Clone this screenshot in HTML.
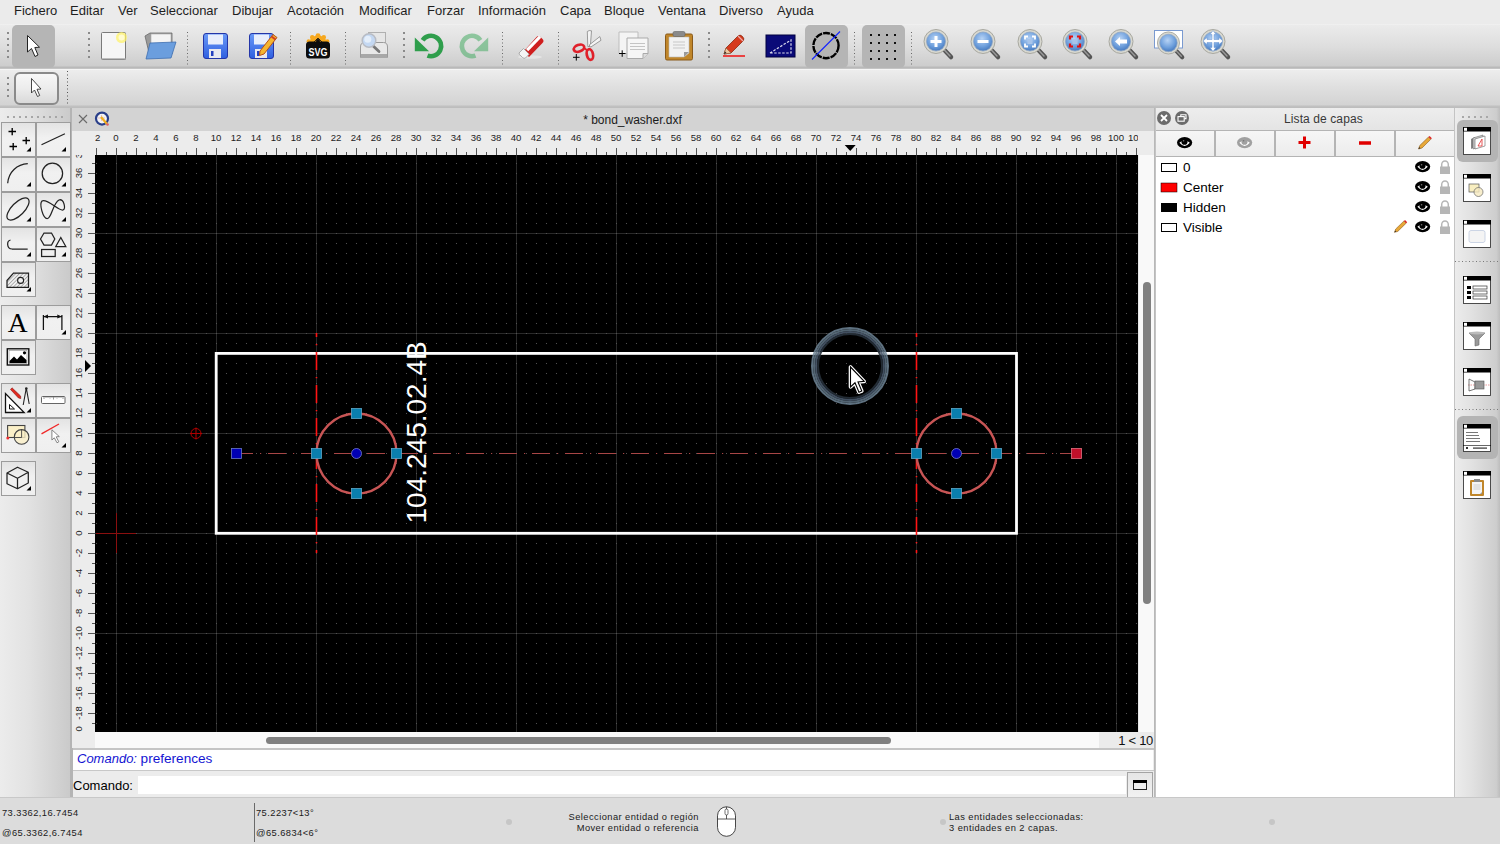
<!DOCTYPE html>
<html><head><meta charset="utf-8">
<style>
*{box-sizing:border-box}
body{margin:0;width:1500px;height:844px;position:relative;overflow:hidden;background:#dcdcdc;font-family:"Liberation Sans",sans-serif;color:#1a1a1a}
.a{position:absolute}
#menubar{left:0;top:0;width:1500px;height:24px;background:#ebebeb}
#menubar span{position:absolute;top:3px;font-size:13px;color:#1e1e1e;white-space:nowrap}
#tb1{left:0;top:24px;width:1500px;height:44px;background:linear-gradient(#f4f4f4 0,#ebebeb 1px,#dedede 50%,#cdcdcd 42px,#b9b9b9 43px,#b9b9b9 44px)}
#tb2{left:0;top:68px;width:1500px;height:39px;background:linear-gradient(#c4c4c4 0,#c4c4c4 1px,#f6f6f6 1px,#f6f6f6 2px,#ededed 2px,#dfdfdf 50%,#d3d3d3 37px,#c0c0c0 38px,#c0c0c0 39px)}
#palette{left:0;top:107px;width:72px;height:690px;background:linear-gradient(90deg,#ececec 0,#e2e2e2 40%,#c9c9c9 100%)}
#doc{left:72px;top:107px;width:1083px;height:690px;background:#ececec}
#dock{left:1155px;top:107px;width:300px;height:690px;background:#fff}
#rtb{left:1453px;top:107px;width:47px;height:690px;background:linear-gradient(90deg,#e8e8e8 0,#dedede 40%,#c6c6c6 100%)}
.pb{border:1px solid #9c9c9c;background:linear-gradient(#e3e3e3,#f1f1f1 45%,#efefef)}
.db{height:25px;background:linear-gradient(#f6f6f6,#ececec)}
#status{left:0;top:797px;width:1500px;height:47px;background:#dcdcdc}
</style></head><body>
<div id="menubar" class="a">
<span style="left:14px">Fichero</span><span style="left:70px">Editar</span><span style="left:118px">Ver</span><span style="left:150px">Seleccionar</span><span style="left:232px">Dibujar</span><span style="left:287px">Acotación</span><span style="left:359px">Modificar</span><span style="left:427px">Forzar</span><span style="left:478px">Información</span><span style="left:560px">Capa</span><span style="left:604px">Bloque</span><span style="left:658px">Ventana</span><span style="left:719px">Diverso</span><span style="left:777px">Ayuda</span>
</div>
<div id="tb1" class="a">
<svg class="a" style="left:0;top:0" width="1500" height="44">
<defs>
<radialGradient id="zg" cx="0.45" cy="0.35" r="0.7"><stop offset="0" stop-color="#b7d3f5"/><stop offset="0.6" stop-color="#6e9fdc"/><stop offset="1" stop-color="#3f72b8"/></radialGradient>
<linearGradient id="blueFl" x1="0" y1="0" x2="0" y2="1"><stop offset="0" stop-color="#6a9af7"/><stop offset="1" stop-color="#2f5fe0"/></linearGradient>
<g id="dots5"><rect x="-1" y="0" width="2" height="2"/><rect x="-1" y="6" width="2" height="2"/><rect x="-1" y="12" width="2" height="2"/><rect x="-1" y="18" width="2" height="2"/><rect x="-1" y="24" width="2" height="2"/></g>
<g id="mag"><line x1="20" y1="20" x2="28" y2="28.5" stroke="#555" stroke-width="4.5" stroke-linecap="round"/><line x1="20" y1="20" x2="27" y2="27.5" stroke="#999" stroke-width="1.5" stroke-linecap="round"/><circle cx="13" cy="13" r="12" fill="#d8d8d0" stroke="#a8a8a0" stroke-width="1"/><circle cx="13" cy="13" r="9.5" fill="url(#zg)" stroke="#8fa6c4" stroke-width="0.8"/></g>
</defs>
<g fill="#8a8a8a"><use href="#dots5" x="8" y="8"/><use href="#dots5" x="89" y="8"/><use href="#dots5" x="404" y="8"/><use href="#dots5" x="709" y="8"/><use href="#dots5" x="737" y="9" style="display:none"/></g>
<g stroke="#6a6a6a" stroke-width="1" stroke-dasharray="1 2.5"><line x1="187.5" y1="8" x2="187.5" y2="42"/><line x1="290.5" y1="8" x2="290.5" y2="42"/><line x1="345.5" y1="8" x2="345.5" y2="42"/><line x1="502.5" y1="8" x2="502.5" y2="42"/><line x1="558.5" y1="8" x2="558.5" y2="42"/><line x1="854.5" y1="8" x2="854.5" y2="42"/><line x1="911.5" y1="8" x2="911.5" y2="42"/></g>
<!-- selected buttons -->
<rect x="12" y="1" width="43" height="43" rx="5" fill="#b5b5b5"/>
<rect x="805" y="1" width="43" height="43" rx="5" fill="#b5b5b5"/>
<rect x="862" y="1" width="43" height="43" rx="5" fill="#b5b5b5"/>
<!-- pointer -->
<path d="M27.5 11.5 L27.5 28 L31.5 24.5 L35 32.5 L38 31 L34.8 23.5 L39.5 23.2 Z" fill="#fff" stroke="#222" stroke-width="1" stroke-linejoin="round"/>
<!-- new doc -->
<rect x="101.5" y="8.5" width="24" height="27" rx="1" fill="#f6f6f6" stroke="#7a7a7a"/>
<rect x="102" y="34" width="24" height="2" fill="#999" opacity="0.6"/>
<circle cx="121.5" cy="13.5" r="5.5" fill="#fff36a" opacity="0.75"/><circle cx="121.5" cy="13.5" r="3" fill="#fffbd0"/>
<!-- open -->
<path d="M145 12 L150 9 L172 9 L172 30 L150 33 Z" fill="#9a9a9a" stroke="#6a6a6a" stroke-width="0.8"/>
<path d="M151 10 L171 10 L171 28 L151 30 Z" fill="#f4f4f4" stroke="#aaa" stroke-width="0.6"/>
<path d="M150 19 L176 18 L171 34 L146 35 Z" fill="#6b9ede" stroke="#3f6fb0" stroke-width="0.8"/>
<!-- save -->
<g transform="translate(203,9)"><rect x="0.5" y="0.5" width="24" height="25" rx="2.5" fill="url(#blueFl)" stroke="#2436a8"/><rect x="5" y="1.5" width="15" height="10" fill="#e8eefc"/><rect x="6" y="16" width="12" height="9" fill="#e8e8f0"/><rect x="8" y="18" width="2.5" height="5" fill="#2440c0"/></g>
<g transform="translate(249,9)"><rect x="0.5" y="0.5" width="24" height="25" rx="2.5" fill="url(#blueFl)" stroke="#2436a8"/><rect x="5" y="1.5" width="15" height="10" fill="#e8eefc"/><rect x="6" y="16" width="12" height="9" fill="#e8e8f0"/><rect x="8" y="18" width="2.5" height="5" fill="#2440c0"/>
<path d="M11 18 L24 1.5 L28 4.5 L15 21 L10.5 22.5 Z" fill="#f5b530" stroke="#b8501a" stroke-width="1"/><path d="M22.5 3.5 L26.5 6.5" stroke="#d04020" stroke-width="2"/></g>
<!-- svg -->
<g transform="translate(306,8)"><g fill="#f7a81e"><circle cx="12" cy="3.6" r="2.4"/><circle cx="6.2" cy="5.2" r="2.2"/><circle cx="17.8" cy="5.2" r="2.2"/><circle cx="2.6" cy="9.2" r="2"/><circle cx="21.4" cy="9.2" r="2"/><path d="M2 11 L6 5 L12 3 L18 5 L22 11 L22 14 L2 14 Z"/></g><path d="M5 13 L12 6 L19 13" fill="none" stroke="#111" stroke-width="0.8"/><circle cx="12" cy="9" r="2" fill="#111"/>
<rect x="0" y="9.5" width="24" height="17" rx="3.5" fill="#0d0d0d"/><text x="12" y="24" font-family="Liberation Sans" font-weight="bold" font-size="11" fill="#fff" text-anchor="middle" textLength="19" lengthAdjust="spacingAndGlyphs">SVG</text></g>
<!-- print preview -->
<g transform="translate(360,8)"><rect x="8.5" y="0.5" width="17" height="12" fill="#e6e6e6" stroke="#b0b0b0"/><path d="M0.5 15 Q0.5 10.5 4.5 10.5 L23.5 10.5 Q27.5 10.5 27.5 15 L27.5 25.5 L0.5 25.5 Z" fill="#e8e8e8" stroke="#9a9a9a"/><rect x="1" y="22" width="26" height="4" fill="#a8a8a8"/><path d="M10 11 L19 19.5" stroke="#777" stroke-width="2.8" stroke-linecap="round"/><circle cx="9" cy="8.5" r="6.8" fill="#c4d8f2" stroke="#b8bcc4" stroke-width="1.5"/><circle cx="7.8" cy="7.3" r="3.5" fill="#e4eefa"/></g>
<!-- undo/redo -->
<g><path d="M422.6 16.2 A10.2 10.2 0 1 1 427.5 31.6" fill="none" stroke="#2f9e4c" stroke-width="4.6"/><path d="M414.8 13.6 L414.8 27.2 L429 27.2 Z" fill="#2f9e4c"/></g>
<g opacity="0.5"><path d="M480.4 16.2 A10.2 10.2 0 1 0 475.5 31.6" fill="none" stroke="#3aa85a" stroke-width="4.6"/><path d="M488.2 13.6 L488.2 27.2 L474 27.2 Z" fill="#3aa85a"/></g>
<!-- eraser -->
<g transform="translate(517,9)"><ellipse cx="13" cy="24" rx="12" ry="1.8" fill="#e4e4e4"/><path d="M6.5 18.5 L19.5 4 Q21.5 2 23.5 4 L25.5 6 Q27.5 8 25.5 10 L12 24 Z" fill="#cf1e1e"/><path d="M9 16 L22 2.6 L24.2 4.8 L11.2 18.2 Z" fill="#fff"/><path d="M2 20 L6.5 15.5 L12.2 21.2 L8.5 25 Q7 26 5.5 24.5 L2.5 21.5 Z" fill="#f4f4f4" stroke="#9a9a9a" stroke-width="0.8"/></g>
<!-- cut -->
<g><path d="M587.3 7.5 Q589 6 591.5 6.8 L590.3 22.5 L587.8 22.5 Z" fill="#f4f4f4" stroke="#777" stroke-width="0.7"/><path d="M599.8 12.6 L601 16.3 L590.6 23.2 L589.2 21 Z" fill="#f4f4f4" stroke="#777" stroke-width="0.7"/>
<ellipse cx="579" cy="24.2" rx="5.4" ry="3.3" transform="rotate(-20 579 24.2)" fill="none" stroke="#e0202a" stroke-width="2.7"/><ellipse cx="589.9" cy="30.5" rx="3.1" ry="5.4" transform="rotate(-12 589.9 30.5)" fill="none" stroke="#e0202a" stroke-width="2.7"/><path d="M584 24 L587.5 26.5" stroke="#e0202a" stroke-width="2"/>
<path d="M573 33.3 h6.6 M576.3 30 v6.6" stroke="#000" stroke-width="1"/></g>
<!-- copy -->
<g transform="translate(618,7.5)"><path d="M1 0.5 H20 V22 H1 Z" fill="#f4f4f4" stroke="#bdbdbd"/><path d="M9 6.5 H30 V22 L25 27 H9 Z" fill="#f6f6f6" stroke="#aaa"/><path d="M25 27 L25 22 L30 22" fill="#ddd" stroke="#aaa"/><g stroke="#c4c4c4"><line x1="12" y1="12" x2="27" y2="12"/><line x1="12" y1="15" x2="27" y2="15"/><line x1="12" y1="18" x2="27" y2="18"/></g><path d="M1 22 h6.5 M4.2 18.8 v6.5" stroke="#000" stroke-width="1"/></g>
<!-- paste -->
<g transform="translate(665,7)"><rect x="0.5" y="3" width="27" height="26" rx="1.5" fill="#c0862a" stroke="#8a5a1a"/><path d="M4 6 H24 V22 L19 26 H4 Z" fill="#f2f2f2" stroke="#bbb" stroke-width="0.6"/><path d="M19 26 L19 21 L24 21 Z" fill="#999"/><g stroke="#c8c8c8"><line x1="8" y1="11" x2="20" y2="11"/><line x1="8" y1="14" x2="20" y2="14"/><line x1="8" y1="17" x2="20" y2="17"/></g><rect x="8" y="0.5" width="12" height="5" rx="1.5" fill="#8a8a8a" stroke="#666" stroke-width="0.6"/></g>
<!-- pencil -->
<g transform="translate(723,11)"><line x1="0" y1="21" x2="22" y2="21" stroke="#f01010" stroke-width="1.5"/><path d="M1 19 L3 13 L15 1 Q17 -1 19.5 1.5 Q22 4 20 6 L8 18 Z" fill="#d63b1e" stroke="#8a2a10" stroke-width="0.8"/><path d="M1 19 L3 13 L8 18 Z" fill="#f0c8a0" stroke="#8a5a3a" stroke-width="0.6"/><path d="M1 19 L2 16.5 L3.5 18 Z" fill="#222"/><path d="M15 1 L20 6" stroke="#eaa" stroke-width="1.2"/></g>
<!-- blue rect -->
<g transform="translate(766,11)"><rect x="0" y="0" width="29" height="22" fill="#0a0a78" stroke="#000040"/><path d="M4 18 L25 5 L25 18 Z" fill="none" stroke="#dde" stroke-width="1.2" stroke-dasharray="2.5 1.5"/></g>
<!-- circle slash -->
<g transform="translate(812,8)"><circle cx="14" cy="13.6" r="12.6" fill="none" stroke="#000" stroke-width="2.4" stroke-dasharray="7 1"/><line x1="0" y1="27.5" x2="28" y2="-0.5" stroke="#1020ff" stroke-width="1.1"/></g>
<!-- grid dots -->
<g fill="#111" transform="translate(870,10)"><rect x="0" y="0" width="2" height="2"/><rect x="8" y="0" width="2" height="2"/><rect x="16" y="0" width="2" height="2"/><rect x="24" y="0" width="2" height="2"/><rect x="0" y="8" width="2" height="2"/><rect x="8" y="8" width="2" height="2"/><rect x="16" y="8" width="2" height="2"/><rect x="24" y="8" width="2" height="2"/><rect x="0" y="16" width="2" height="2"/><rect x="8" y="16" width="2" height="2"/><rect x="16" y="16" width="2" height="2"/><rect x="24" y="16" width="2" height="2"/><rect x="0" y="24" width="2" height="2"/><rect x="8" y="24" width="2" height="2"/><rect x="16" y="24" width="2" height="2"/><rect x="24" y="24" width="2" height="2"/></g>
<!-- zoom -->
<g transform="translate(923,4.5)"><use href="#mag"/><path d="M13 7.5 V18.5 M7.5 13 H18.5" stroke="#fff" stroke-width="3"/></g>
<g transform="translate(970,4.5)"><use href="#mag"/><path d="M7.5 13 H18.5" stroke="#fff" stroke-width="3"/></g>
<g transform="translate(1017,4.5)"><use href="#mag"/><path d="M8 11 V8 H11 M15 8 H18 V11 M18 15 V18 H15 M11 18 H8 V15" fill="none" stroke="#fff" stroke-width="1.8"/><rect x="10.5" y="10.5" width="5" height="5" fill="#a8c4ea"/></g>
<g transform="translate(1062,4.5)"><use href="#mag"/><path d="M8 11 V8 H11 M15 8 H18 V11 M18 15 V18 H15 M11 18 H8 V15" fill="none" stroke="#e01010" stroke-width="2.2"/><rect x="10.5" y="10.5" width="5" height="5" fill="#a8c4ea"/></g>
<g transform="translate(1108,4.5)"><use href="#mag"/><path d="M7 13 L12 8.5 V11 H19 V15 H12 V17.5 Z" fill="#fff"/></g>
<g transform="translate(1154,6)"><rect x="0.5" y="0.5" width="28" height="17.5" fill="#fff" stroke="#7a9ad0"/><g transform="translate(2.5,1) scale(0.92)"><use href="#mag"/></g></g>
<g transform="translate(1200,4.5)"><use href="#mag"/><path d="M13 2 L16 6 H14 V11 H19 V9 L23 12.5 L19 16 V14 H14 V19 H16 L13 23 L10 19 H12 V14 H7 V16 L3 12.5 L7 9 V11 H12 V6 H10 Z" fill="#fff" stroke="#6a95d0" stroke-width="0.5"/></g>
</svg>
</div>
<div id="tb2" class="a">
<svg class="a" style="left:0;top:0" width="200" height="39">
<g fill="#8a8a8a"><rect x="7" y="9" width="2" height="2"/><rect x="7" y="15" width="2" height="2"/><rect x="7" y="21" width="2" height="2"/><rect x="7" y="27" width="2" height="2"/></g>
<defs><linearGradient id="btn2" x1="0" y1="0" x2="0" y2="1"><stop offset="0" stop-color="#f8f8f8"/><stop offset="0.5" stop-color="#ececec"/><stop offset="1" stop-color="#d8d8d8"/></linearGradient></defs>
<rect x="15" y="5" width="43" height="31" rx="5" fill="url(#btn2)" stroke="#8a8a8a" stroke-width="2"/>
<path d="M31.5 10.5 L31.5 25 L34.5 22 L37.5 28.5 L39.7 27.5 L37 21.3 L41 21 Z" fill="#fff" stroke="#333" stroke-width="0.9" stroke-linejoin="round"/>
<line x1="67.5" y1="3" x2="67.5" y2="37" stroke="#555" stroke-width="1" stroke-dasharray="1 2.5"/>
</svg>
</div>
<div id="palette" class="a">
<svg class="a" style="left:0;top:0" width="72" height="20"><g fill="#a6a6a6"><rect x="7" y="9" width="2" height="2"/><rect x="13" y="9" width="2" height="2"/><rect x="19" y="9" width="2" height="2"/><rect x="25" y="9" width="2" height="2"/><rect x="31" y="9" width="2" height="2"/><rect x="37" y="9" width="2" height="2"/><rect x="43" y="9" width="2" height="2"/><rect x="49" y="9" width="2" height="2"/><rect x="55" y="9" width="2" height="2"/><rect x="61" y="9" width="2" height="2"/></g></svg>
<div class="a" style="left:70px;top:0;width:2px;height:690px;background:#b4b4b4"></div>
<div class="a pb" style="left:1px;top:15px;width:35px;height:35px"><svg width="35" height="35" style="position:absolute;left:-1px;top:-1px"><path d="M7.5 9.5h7.5M11.2 6v7.3M21.5 18.5h7.5M25.2 15v7.3M8.5 24.5h7.5M12.2 21v7.3" stroke="#000" stroke-width="1.35"/><path d="M25.5 29.5 L30 25 L30 29.5 Z" fill="#000"/></svg></div>
<div class="a pb" style="left:36px;top:15px;width:35px;height:35px"><svg width="35" height="35" style="position:absolute;left:-1px;top:-1px"><path d="M5.5 22.7 L28.9 11.8" fill="none" stroke="#222" stroke-width="1.25"/><path d="M25.5 29.5 L30 25 L30 29.5 Z" fill="#000"/></svg></div>
<div class="a pb" style="left:1px;top:50px;width:35px;height:35px"><svg width="35" height="35" style="position:absolute;left:-1px;top:-1px"><path d="M6.7 26.2 C7.5 15 16 7.2 26.8 6.6" fill="none" stroke="#222" stroke-width="1.25"/><path d="M25.5 29.5 L30 25 L30 29.5 Z" fill="#000"/></svg></div>
<div class="a pb" style="left:36px;top:50px;width:35px;height:35px"><svg width="35" height="35" style="position:absolute;left:-1px;top:-1px"><circle cx="16.4" cy="16.4" r="10.2" fill="none" stroke="#222" stroke-width="1.25"/><path d="M25.5 29.5 L30 25 L30 29.5 Z" fill="#000"/></svg></div>
<div class="a pb" style="left:1px;top:85px;width:35px;height:35px"><svg width="35" height="35" style="position:absolute;left:-1px;top:-1px"><ellipse cx="17" cy="17" rx="14.3" ry="6.3" transform="rotate(-45 17 17)" fill="none" stroke="#222" stroke-width="1.25"/><path d="M25.5 29.5 L30 25 L30 29.5 Z" fill="#000"/></svg></div>
<div class="a pb" style="left:36px;top:85px;width:35px;height:35px"><svg width="35" height="35" style="position:absolute;left:-1px;top:-1px"><path d="M6 9 C3 12 7 27 11.5 26.5 C15.5 26 17 11 23 8 C28 6 30 17 27 18 C23 19.5 11 6 6 9 Z" fill="none" stroke="#222" stroke-width="1.25"/><path d="M25.5 29.5 L30 25 L30 29.5 Z" fill="#000"/></svg></div>
<div class="a pb" style="left:1px;top:120px;width:35px;height:35px"><svg width="35" height="35" style="position:absolute;left:-1px;top:-1px"><path d="M9.5 13 C5.5 14 5.5 21.5 11 22 L26.7 22" fill="none" stroke="#222" stroke-width="1.25"/><path d="M25.5 29.5 L30 25 L30 29.5 Z" fill="#000"/></svg></div>
<div class="a pb" style="left:36px;top:120px;width:35px;height:35px"><svg width="35" height="35" style="position:absolute;left:-1px;top:-1px"><path d="M4.5 12 L8 6 L15.5 6 L18.8 12 L15.5 18 L8 18 Z" fill="none" stroke="#222" stroke-width="1.25"/><path d="M19.8 19.5 L24.8 10.5 L29.8 19.5 Z" fill="none" stroke="#222" stroke-width="1.25"/><rect x="5.6" y="22.5" width="13.6" height="7" fill="none" stroke="#222" stroke-width="1.25"/><path d="M25.5 29.5 L30 25 L30 29.5 Z" fill="#000"/></svg></div>
<div class="a pb" style="left:1px;top:155px;width:35px;height:35px"><svg width="35" height="35" style="position:absolute;left:-1px;top:-1px"><defs><pattern id="hp" patternUnits="userSpaceOnUse" width="2.6" height="2.6" patternTransform="rotate(45)"><line x1="0" y1="0" x2="0" y2="2.6" stroke="#555" stroke-width="0.8"/></pattern></defs><path d="M6 18.5 L12.5 11 L27.5 11 L27.5 25.3 L6 25.3 Z" fill="url(#hp)" stroke="#222" stroke-width="1.25"/><circle cx="19.6" cy="18.4" r="3" fill="#f0f0f0" stroke="#222" stroke-width="1.1"/><path d="M25.5 29.5 L30 25 L30 29.5 Z" fill="#000"/></svg></div>
<div class="a pb" style="left:1px;top:198px;width:35px;height:35px"><svg width="35" height="35" style="position:absolute;left:-1px;top:-1px"><text x="16.8" y="26.7" font-family="Liberation Serif" font-size="27.5" text-anchor="middle" fill="#000">A</text></svg></div>
<div class="a pb" style="left:36px;top:198px;width:35px;height:35px"><svg width="35" height="35" style="position:absolute;left:-1px;top:-1px"><path d="M7.4 10 V25 M25.9 10 V25 M8 11.6 H25.3" stroke="#111" stroke-width="1.25" fill="none"/><path d="M7.6 11.6 L12 9.6 L12 13.6 Z M25.7 11.6 L21.3 9.6 L21.3 13.6 Z" fill="#111"/><path d="M25.5 29.5 L30 25 L30 29.5 Z" fill="#000"/></svg></div>
<div class="a pb" style="left:1px;top:233px;width:35px;height:35px"><svg width="35" height="35" style="position:absolute;left:-1px;top:-1px"><rect x="6.3" y="8.8" width="21.5" height="16.2" fill="#fff" stroke="#111" stroke-width="1.4"/><rect x="8" y="10.5" width="18" height="12.8" fill="none" stroke="#777" stroke-width="0.5"/><path d="M8.5 23 L8.5 21 L13 16.5 L16 19.5 L20 15 L25.5 20 L25.5 23 Z" fill="#000"/><circle cx="23.5" cy="12.8" r="1.6" fill="#000"/></svg></div>
<div class="a pb" style="left:1px;top:276px;width:35px;height:35px"><svg width="35" height="35" style="position:absolute;left:-1px;top:-1px"><path d="M4.5 10.5 L4.5 29.5 L23.2 29.5 Z" fill="#fff" stroke="#111" stroke-width="1.3"/><path d="M8.5 21.5 L8.5 26 L13.5 26 Z" fill="none" stroke="#111" stroke-width="1"/><path d="M9.5 6.5 L11 4.8 L19.6 13 L19.8 15.6 L17.5 15 Z" fill="#e02a20" stroke="#8a1010" stroke-width="0.6"/><path d="M25.3 5 L22.2 22 M25.3 5 L28.2 21" stroke="#222" stroke-width="1.1"/><circle cx="25.3" cy="5.5" r="1.3" fill="#222"/><path d="M25.5 29.5 L30 25 L30 29.5 Z" fill="#000"/></svg></div>
<div class="a pb" style="left:36px;top:276px;width:35px;height:35px"><svg width="35" height="35" style="position:absolute;left:-1px;top:-1px"><rect x="5.5" y="13.5" width="23.5" height="7" rx="1" fill="#fff" stroke="#666" stroke-width="1"/><path d="M8 13.5v2.5M10 13.5v1.5M12 13.5v1.5M14 13.5v2M16 13.5v1.5M17.5 13.5v3M19 13.5v1.5M21 13.5v2M23 13.5v1.5M25 13.5v1.5M27 13.5v2.5" stroke="#555" stroke-width="0.6"/></svg></div>
<div class="a pb" style="left:1px;top:311px;width:35px;height:35px"><svg width="35" height="35" style="position:absolute;left:-1px;top:-1px"><rect x="6.6" y="7.5" width="17.3" height="12" fill="#fbf0c8" stroke="#444" stroke-width="1.1"/><circle cx="20.6" cy="18.9" r="7.3" fill="#fbf0c8" fill-opacity="0.8" stroke="#444" stroke-width="1.1"/><path d="M20.6 11.6 V19.5 H13.3" fill="none" stroke="#444" stroke-width="0.9"/><circle cx="6.8" cy="20" r="1.5" fill="#f03030"/></svg></div>
<div class="a pb" style="left:36px;top:311px;width:35px;height:35px"><svg width="35" height="35" style="position:absolute;left:-1px;top:-1px"><path d="M5.5 15.8 L23 6" stroke="#f02828" stroke-width="1.4"/><path d="M15.9 11.8 L15.9 22 L18.3 19.8 L21 24.8 L22.8 23.8 L20.2 18.8 L23.3 18.6 Z" fill="#fff" stroke="#777" stroke-width="0.9" stroke-linejoin="round"/><path d="M25.5 29.5 L30 25 L30 29.5 Z" fill="#000"/></svg></div>
<div class="a pb" style="left:1px;top:354px;width:35px;height:35px"><svg width="35" height="35" style="position:absolute;left:-1px;top:-1px"><path d="M6 12 L16.5 6.2 L27.3 11.3 L27.3 22 L16.5 27.8 L6 22.7 Z M6 12 L16.5 17.2 L27.3 11.3 M16.5 17.2 V27.8" fill="none" stroke="#222" stroke-width="1.25" stroke-linejoin="round"/><path d="M25.5 29.5 L30 25 L30 29.5 Z" fill="#000"/></svg></div>
</div>
<div id="doc" class="a">
<div class="a" style="left:0;top:0;width:1083px;height:24px;background:#d3d3d3"></div>
<svg class="a" style="left:6px;top:7px" width="10" height="10"><path d="M1 1L9 9M9 1L1 9" stroke="#6a6a6a" stroke-width="1.1"/></svg>
<svg class="a" style="left:22px;top:4px" width="16" height="16"><circle cx="8" cy="7.6" r="6" fill="#f4f4f4" stroke="#2a3f8a" stroke-width="2.2"/><path d="M4 7 h7 M7.5 4 v6" stroke="#e0a0a0" stroke-width="0.6"/><path d="M7 6 L13 13" stroke="#f0b020" stroke-width="2.2"/><circle cx="13.5" cy="13.5" r="1.3" fill="#e06060"/></svg>
<div class="a" style="left:0;top:13px;width:1083px;text-align:center;font-size:12px;line-height:0;color:#1a1a1a"><span style="position:relative;left:19px">* bond_washer.dxf</span></div>
<div class="a" style="left:0;top:24px;width:1083px;height:24px;background:#ececec"></div>
<svg class="a" style="left:23px;top:24px" width="1043" height="24"><g font-family="Liberation Sans" font-size="9.6" fill="#1e1e1e" text-anchor="middle"><text x="1" y="10.2">-2</text><text x="21" y="10.2">0</text><text x="41" y="10.2">2</text><text x="61" y="10.2">4</text><text x="81" y="10.2">6</text><text x="101" y="10.2">8</text><text x="121" y="10.2">10</text><text x="141" y="10.2">12</text><text x="161" y="10.2">14</text><text x="181" y="10.2">16</text><text x="201" y="10.2">18</text><text x="221" y="10.2">20</text><text x="241" y="10.2">22</text><text x="261" y="10.2">24</text><text x="281" y="10.2">26</text><text x="301" y="10.2">28</text><text x="321" y="10.2">30</text><text x="341" y="10.2">32</text><text x="361" y="10.2">34</text><text x="381" y="10.2">36</text><text x="401" y="10.2">38</text><text x="421" y="10.2">40</text><text x="441" y="10.2">42</text><text x="461" y="10.2">44</text><text x="481" y="10.2">46</text><text x="501" y="10.2">48</text><text x="521" y="10.2">50</text><text x="541" y="10.2">52</text><text x="561" y="10.2">54</text><text x="581" y="10.2">56</text><text x="601" y="10.2">58</text><text x="621" y="10.2">60</text><text x="641" y="10.2">62</text><text x="661" y="10.2">64</text><text x="681" y="10.2">66</text><text x="701" y="10.2">68</text><text x="721" y="10.2">70</text><text x="741" y="10.2">72</text><text x="761" y="10.2">74</text><text x="781" y="10.2">76</text><text x="801" y="10.2">78</text><text x="821" y="10.2">80</text><text x="841" y="10.2">82</text><text x="861" y="10.2">84</text><text x="881" y="10.2">86</text><text x="901" y="10.2">88</text><text x="921" y="10.2">90</text><text x="941" y="10.2">92</text><text x="961" y="10.2">94</text><text x="981" y="10.2">96</text><text x="1001" y="10.2">98</text><text x="1021" y="10.2">100</text><text x="1041" y="10.2">102</text></g><path d="M1.5 17v7M11.5 21v3M21.5 17v7M31.5 21v3M41.5 17v7M51.5 21v3M61.5 17v7M71.5 21v3M81.5 17v7M91.5 21v3M101.5 17v7M111.5 21v3M121.5 17v7M131.5 21v3M141.5 17v7M151.5 21v3M161.5 17v7M171.5 21v3M181.5 17v7M191.5 21v3M201.5 17v7M211.5 21v3M221.5 17v7M231.5 21v3M241.5 17v7M251.5 21v3M261.5 17v7M271.5 21v3M281.5 17v7M291.5 21v3M301.5 17v7M311.5 21v3M321.5 17v7M331.5 21v3M341.5 17v7M351.5 21v3M361.5 17v7M371.5 21v3M381.5 17v7M391.5 21v3M401.5 17v7M411.5 21v3M421.5 17v7M431.5 21v3M441.5 17v7M451.5 21v3M461.5 17v7M471.5 21v3M481.5 17v7M491.5 21v3M501.5 17v7M511.5 21v3M521.5 17v7M531.5 21v3M541.5 17v7M551.5 21v3M561.5 17v7M571.5 21v3M581.5 17v7M591.5 21v3M601.5 17v7M611.5 21v3M621.5 17v7M631.5 21v3M641.5 17v7M651.5 21v3M661.5 17v7M671.5 21v3M681.5 17v7M691.5 21v3M701.5 17v7M711.5 21v3M721.5 17v7M731.5 21v3M741.5 17v7M751.5 21v3M761.5 17v7M771.5 21v3M781.5 17v7M791.5 21v3M801.5 17v7M811.5 21v3M821.5 17v7M831.5 21v3M841.5 17v7M851.5 21v3M861.5 17v7M871.5 21v3M881.5 17v7M891.5 21v3M901.5 17v7M911.5 21v3M921.5 17v7M931.5 21v3M941.5 17v7M951.5 21v3M961.5 17v7M971.5 21v3M981.5 17v7M991.5 21v3M1001.5 17v7M1011.5 21v3M1021.5 17v7M1031.5 21v3M1041.5 17v7M1051.5 21v3" stroke="#555" stroke-width="1"/>
<path d="M750 14 h11 l-5.5 6 z" fill="#000" transform="translate(-0.3,0)"/></svg>
<div class="a" style="left:0;top:48px;width:23px;height:593px;background:#ececec"></div>
<svg class="a" style="left:0;top:48px" width="23" height="577"><g font-family="Liberation Sans" font-size="9.5" fill="#1e1e1e" text-anchor="middle"><text transform="translate(9.6 578) rotate(-90)" x="0" y="0">-20</text><text transform="translate(9.6 558) rotate(-90)" x="0" y="0">-18</text><text transform="translate(9.6 538) rotate(-90)" x="0" y="0">-16</text><text transform="translate(9.6 518) rotate(-90)" x="0" y="0">-14</text><text transform="translate(9.6 498) rotate(-90)" x="0" y="0">-12</text><text transform="translate(9.6 478) rotate(-90)" x="0" y="0">-10</text><text transform="translate(9.6 458) rotate(-90)" x="0" y="0">-8</text><text transform="translate(9.6 438) rotate(-90)" x="0" y="0">-6</text><text transform="translate(9.6 418) rotate(-90)" x="0" y="0">-4</text><text transform="translate(9.6 398) rotate(-90)" x="0" y="0">-2</text><text transform="translate(9.6 378) rotate(-90)" x="0" y="0">0</text><text transform="translate(9.6 358) rotate(-90)" x="0" y="0">2</text><text transform="translate(9.6 338) rotate(-90)" x="0" y="0">4</text><text transform="translate(9.6 318) rotate(-90)" x="0" y="0">6</text><text transform="translate(9.6 298) rotate(-90)" x="0" y="0">8</text><text transform="translate(9.6 278) rotate(-90)" x="0" y="0">10</text><text transform="translate(9.6 258) rotate(-90)" x="0" y="0">12</text><text transform="translate(9.6 238) rotate(-90)" x="0" y="0">14</text><text transform="translate(9.6 218) rotate(-90)" x="0" y="0">16</text><text transform="translate(9.6 198) rotate(-90)" x="0" y="0">18</text><text transform="translate(9.6 178) rotate(-90)" x="0" y="0">20</text><text transform="translate(9.6 158) rotate(-90)" x="0" y="0">22</text><text transform="translate(9.6 138) rotate(-90)" x="0" y="0">24</text><text transform="translate(9.6 118) rotate(-90)" x="0" y="0">26</text><text transform="translate(9.6 98) rotate(-90)" x="0" y="0">28</text><text transform="translate(9.6 78) rotate(-90)" x="0" y="0">30</text><text transform="translate(9.6 58) rotate(-90)" x="0" y="0">32</text><text transform="translate(9.6 38) rotate(-90)" x="0" y="0">34</text><text transform="translate(9.6 18) rotate(-90)" x="0" y="0">36</text><text transform="translate(9.6 -2) rotate(-90)" x="0" y="0">38</text></g><path d="M20 588.5h3M16 578.5h7M20 568.5h3M16 558.5h7M20 548.5h3M16 538.5h7M20 528.5h3M16 518.5h7M20 508.5h3M16 498.5h7M20 488.5h3M16 478.5h7M20 468.5h3M16 458.5h7M20 448.5h3M16 438.5h7M20 428.5h3M16 418.5h7M20 408.5h3M16 398.5h7M20 388.5h3M16 378.5h7M20 368.5h3M16 358.5h7M20 348.5h3M16 338.5h7M20 328.5h3M16 318.5h7M20 308.5h3M16 298.5h7M20 288.5h3M16 278.5h7M20 268.5h3M16 258.5h7M20 248.5h3M16 238.5h7M20 228.5h3M16 218.5h7M20 208.5h3M16 198.5h7M20 188.5h3M16 178.5h7M20 168.5h3M16 158.5h7M20 148.5h3M16 138.5h7M20 128.5h3M16 118.5h7M20 108.5h3M16 98.5h7M20 88.5h3M16 78.5h7M20 68.5h3M16 58.5h7M20 48.5h3M16 38.5h7M20 28.5h3M16 18.5h7M20 8.5h3M16 -1.5h7" stroke="#555" stroke-width="1"/>
<path d="M13 205 v12 l6 -6 z" fill="#000"/></svg>
<svg class="a" style="left:23px;top:48px" width="1043" height="577" id="cv">
<defs>
<pattern id="gd" patternUnits="userSpaceOnUse" width="10" height="10"><rect x="1" y="8" width="1" height="1" fill="#525252"/></pattern>
</defs>
<rect width="1043" height="577" fill="#000"/>
<g stroke="#2a2a2a" stroke-width="1"><path d="M21.5 0V577M121.5 0V577M221.5 0V577M321.5 0V577M421.5 0V577M521.5 0V577M621.5 0V577M721.5 0V577M821.5 0V577M921.5 0V577M1021.5 0V577"/><path d="M0 78.5H1043M0 178.5H1043M0 278.5H1043M0 378.5H1043M0 478.5H1043"/></g>
<rect width="1043" height="577" fill="url(#gd)"/>

<!-- origin cross -->
<path d="M1 378.5H41M21.5 358V398" stroke="#8a0f0f" stroke-width="1"/>
<!-- red small crosshair -->
<g stroke="#b00000" stroke-width="1" fill="none"><circle cx="101" cy="278.5" r="5"/><path d="M95 278.5h12M101 272.5v12"/></g>
<!-- rectangle -->
<rect x="121.2" y="198.4" width="800.3" height="179.9" fill="none" stroke="#fff" stroke-width="2.8"/>
<!-- vertical center lines -->
<g stroke="#ff1414" stroke-width="1.6" stroke-dasharray="18 7 1.2 6.8" stroke-dashoffset="14"><line x1="221.5" y1="178" x2="221.5" y2="398"/><line x1="821.5" y1="178" x2="821.5" y2="398"/></g>
<!-- horizontal center line -->
<line x1="140" y1="298.5" x2="981" y2="298.5" stroke="#a84646" stroke-width="1.2" stroke-dasharray="18 7 1.2 6.8" stroke-dashoffset="0"/>
<!-- circles -->
<g fill="none" stroke="#c85555" stroke-width="2.4"><circle cx="261.5" cy="298.5" r="40"/><circle cx="861.5" cy="298.5" r="40"/></g>
<!-- text -->
<text transform="translate(331.2 368.5) rotate(-90)" font-family="Liberation Sans" font-size="28" fill="#fff">104.245.02.4B</text>
<!-- handles -->
<g fill="#0a7fae" stroke="#5fa9c9" stroke-width="0.8">
<rect x="216.5" y="293.5" width="10" height="10"/><rect x="296.5" y="293.5" width="10" height="10"/><rect x="256.5" y="253.5" width="10" height="10"/><rect x="256.5" y="333.5" width="10" height="10"/>
<rect x="816.5" y="293.5" width="10" height="10"/><rect x="896.5" y="293.5" width="10" height="10"/><rect x="856.5" y="253.5" width="10" height="10"/><rect x="856.5" y="333.5" width="10" height="10"/>
</g>
<rect x="136.5" y="293.5" width="10" height="10" fill="#0000b4" stroke="#6a78c8" stroke-width="0.8"/>
<rect x="976.5" y="293.5" width="10" height="10" fill="#c0102a" stroke="#e07080" stroke-width="0.8"/>
<g fill="#0000b4" stroke="#7a80d0" stroke-width="0.8"><circle cx="261.5" cy="298.5" r="5"/><circle cx="861.5" cy="298.5" r="5"/></g>
<!-- cursor ring -->
<g fill="none"><circle cx="755" cy="211" r="38" stroke="#6f8596" stroke-width="2" opacity="0.85"/><circle cx="755" cy="211" r="36" stroke="#5b6f7e" stroke-width="2" opacity="0.9"/><circle cx="755" cy="211" r="34" stroke="#48586a" stroke-width="2" opacity="0.9"/><circle cx="755" cy="211" r="32" stroke="#26303a" stroke-width="2" opacity="0.9"/></g>
<path d="M755.5 212 L755.5 232 L760 227.8 L764 237.2 L766.8 236 L763 226.9 L769.2 226.4 Z" fill="#fff" stroke="#fff" stroke-width="3.6" stroke-linejoin="round"/><path d="M755.5 212 L755.5 232 L760 227.8 L764 237.2 L766.8 236 L763 226.9 L769.2 226.4 Z" fill="#fff" stroke="#000" stroke-width="1.1" stroke-linejoin="miter"/>
</svg>
<div class="a" style="left:1066px;top:48px;width:17px;height:593px;background:#f9f9f9;border-left:1px solid #e8e8e8"></div>
<div class="a" style="left:1071px;top:175px;width:8px;height:322px;border-radius:4px;background:#808080"></div>
<div class="a" style="left:23px;top:625px;width:1004px;height:16px;background:#f9f9f9"></div>
<div class="a" style="left:194px;top:630px;width:625px;height:7px;border-radius:4px;background:#808080"></div>
<div class="a" style="left:1027px;top:625px;width:55px;height:16px;background:#ebebeb;font-size:13px;line-height:17px;text-align:right;color:#111;padding-right:1px;white-space:nowrap;letter-spacing:-0.3px">1 &lt; 10</div>
<div class="a" style="left:1082px;top:0;width:1px;height:690px;background:#b8b8b8"></div>
</div>
<div id="dock" class="a">
<div class="a" style="left:0;top:0;width:1px;height:690px;background:#c4c4c4"></div>
<div class="a" style="left:1px;top:1px;width:298px;height:23px;background:linear-gradient(#ededed,#e4e4e4)"></div>
<svg class="a" style="left:0;top:0" width="299" height="50">
<circle cx="9" cy="11" r="7" fill="#6b6b6b"/><path d="M6 8 L12 14 M12 8 L6 14" stroke="#fff" stroke-width="1.8"/>
<circle cx="27" cy="11" r="7" fill="#6b6b6b"/><path d="M25.8 9.6 V7.8 H31 V11.6 H29.4" fill="none" stroke="#fff" stroke-width="1.1"/><rect x="23" y="9.6" width="6.2" height="4.6" fill="#6b6b6b" stroke="#fff" stroke-width="1.1"/>
</svg>
<div class="a" style="left:129px;top:5px;font-size:12px;color:#383838;white-space:nowrap;letter-spacing:0.1px">Lista de capas</div>
<div class="a" style="left:1px;top:23px;width:298px;height:27px;background:#b4b4b4"></div>
<div class="a db" style="left:1px;top:24px;width:58px"></div>
<div class="a db" style="left:61px;top:24px;width:58px"></div>
<div class="a db" style="left:121px;top:24px;width:58px"></div>
<div class="a db" style="left:181px;top:24px;width:58px"></div>
<div class="a db" style="left:241px;top:24px;width:58px"></div>
<svg class="a" style="left:0;top:0" width="299" height="140">
<g transform="translate(22,30)"><ellipse cx="7.6" cy="5.6" rx="7.6" ry="5.6" fill="#000"/><path d="M2.4 5.8 Q7.6 0.5 12.8 5.8 Q7.6 12 2.4 5.8 Z" fill="#fff"/><circle cx="7.5" cy="4.7" r="3.1" fill="#000"/><circle cx="6.6" cy="3.8" r="0.8" fill="#777"/></g><g transform="translate(82,30)"><ellipse cx="7.6" cy="5.6" rx="7.6" ry="5.6" fill="#a0a0a0"/><path d="M2.4 5.8 Q7.6 0.5 12.8 5.8 Q7.6 12 2.4 5.8 Z" fill="#fff"/><circle cx="7.5" cy="4.7" r="3.1" fill="#a0a0a0"/><circle cx="6.6" cy="3.8" r="0.8" fill="#777"/></g>
<path d="M143.5 35.5 h12 M149.5 29.5 v12" stroke="#e00000" stroke-width="3"/>
<path d="M204 36 h12" stroke="#e00000" stroke-width="3.5"/>
<g transform="translate(263,29) scale(1)"><path d="M0.5 13 L1.8 9.5 L10.5 1 L12.8 3.3 L4 12 Z" fill="#e8a838" stroke="#8a5a1a" stroke-width="0.6"/><path d="M10.5 1 L11.6 0 L13.9 2.3 L12.8 3.3 Z" fill="#e02020"/><path d="M0.5 13 L1.2 11 L2.5 12.3 Z" fill="#333"/></g>
<g font-family="Liberation Sans" font-size="13.5" fill="#000">
<text x="28" y="65">0</text><text x="28" y="85">Center</text><text x="28" y="105">Hidden</text><text x="28" y="125">Visible</text>
</g>
<rect x="6.5" y="56.5" width="15" height="8" fill="#fff" stroke="#000"/>
<rect x="6" y="76" width="16" height="9" fill="#f00" stroke="#000" stroke-width="0.5"/>
<rect x="6" y="96" width="16" height="9" fill="#000"/>
<rect x="6.5" y="116.5" width="15" height="8" fill="#fff" stroke="#000"/>
<g transform="translate(260,54)"><ellipse cx="7.6" cy="5.6" rx="7.6" ry="5.6" fill="#000"/><path d="M2.4 5.8 Q7.6 0.5 12.8 5.8 Q7.6 12 2.4 5.8 Z" fill="#fff"/><circle cx="7.5" cy="4.7" r="3.1" fill="#000"/><circle cx="6.6" cy="3.8" r="0.8" fill="#777"/></g><g transform="translate(260,74)"><ellipse cx="7.6" cy="5.6" rx="7.6" ry="5.6" fill="#000"/><path d="M2.4 5.8 Q7.6 0.5 12.8 5.8 Q7.6 12 2.4 5.8 Z" fill="#fff"/><circle cx="7.5" cy="4.7" r="3.1" fill="#000"/><circle cx="6.6" cy="3.8" r="0.8" fill="#777"/></g><g transform="translate(260,94)"><ellipse cx="7.6" cy="5.6" rx="7.6" ry="5.6" fill="#000"/><path d="M2.4 5.8 Q7.6 0.5 12.8 5.8 Q7.6 12 2.4 5.8 Z" fill="#fff"/><circle cx="7.5" cy="4.7" r="3.1" fill="#000"/><circle cx="6.6" cy="3.8" r="0.8" fill="#777"/></g><g transform="translate(260,114)"><ellipse cx="7.6" cy="5.6" rx="7.6" ry="5.6" fill="#000"/><path d="M2.4 5.8 Q7.6 0.5 12.8 5.8 Q7.6 12 2.4 5.8 Z" fill="#fff"/><circle cx="7.5" cy="4.7" r="3.1" fill="#000"/><circle cx="6.6" cy="3.8" r="0.8" fill="#777"/></g>
<g transform="translate(285,53)"><path d="M1.7 7 V4.5 A3.3 3.6 0 0 1 8.3 4.5 V7" fill="none" stroke="#b6b6b6" stroke-width="1.5"/><rect x="0" y="6.5" width="10" height="7.5" fill="#b6b6b6"/></g><g transform="translate(285,73)"><path d="M1.7 7 V4.5 A3.3 3.6 0 0 1 8.3 4.5 V7" fill="none" stroke="#b6b6b6" stroke-width="1.5"/><rect x="0" y="6.5" width="10" height="7.5" fill="#b6b6b6"/></g><g transform="translate(285,93)"><path d="M1.7 7 V4.5 A3.3 3.6 0 0 1 8.3 4.5 V7" fill="none" stroke="#b6b6b6" stroke-width="1.5"/><rect x="0" y="6.5" width="10" height="7.5" fill="#b6b6b6"/></g><g transform="translate(285,113)"><path d="M1.7 7 V4.5 A3.3 3.6 0 0 1 8.3 4.5 V7" fill="none" stroke="#b6b6b6" stroke-width="1.5"/><rect x="0" y="6.5" width="10" height="7.5" fill="#b6b6b6"/></g>
<g transform="translate(239,113) scale(0.95)"><path d="M0.5 13 L1.8 9.5 L10.5 1 L12.8 3.3 L4 12 Z" fill="#e8a838" stroke="#8a5a1a" stroke-width="0.6"/><path d="M10.5 1 L11.6 0 L13.9 2.3 L12.8 3.3 Z" fill="#e02020"/><path d="M0.5 13 L1.2 11 L2.5 12.3 Z" fill="#333"/></g>
</svg>
<div class="a" style="left:299px;top:0;width:1px;height:690px;background:#c4c4c4"></div>
</div>
<div id="rtb" class="a" style="left:1455px;width:45px;background:linear-gradient(90deg,#ececec 0,#e2e2e2 35%,#cdcdcd 92%,#bdbdbd 100%)">
<svg class="a" style="left:0;top:0" width="45" height="400">
<g fill="#a8a8a8"><rect x="7" y="9" width="2" height="2"/><rect x="13" y="9" width="2" height="2"/><rect x="19" y="9" width="2" height="2"/><rect x="25" y="9" width="2" height="2"/><rect x="31" y="9" width="2" height="2"/></g>
<rect x="2" y="13" width="41" height="42" rx="6" fill="#b4b4b4"/>
<rect x="2" y="309" width="41" height="43" rx="6" fill="#b4b4b4"/>
<line x1="0" y1="154.5" x2="45" y2="154.5" stroke="#777" stroke-dasharray="1 2.5"/>
<line x1="0" y1="302.5" x2="45" y2="302.5" stroke="#777" stroke-dasharray="1 2.5"/>
<g transform="translate(8,20)"><rect x="0.5" y="0.5" width="27" height="27" fill="#fff" stroke="#3a3a3a" stroke-width="0.9"/><rect x="0" y="0" width="28" height="4.5" fill="#000"/><rect x="1" y="0.8" width="3" height="3" fill="#fff"/><path d="M8 12 L12 10 L12 20 L8 22 Z" fill="#888"/><path d="M10 11 L20 8 L20 19 L10 22 Z" fill="#cfcfcf" stroke="#555" stroke-width="0.5"/><path d="M12 12 L22 9 L22 19 L12 22 Z" fill="#fff" stroke="#666" stroke-width="0.6"/><path d="M15 19 L19 12 L19 19 Z" fill="none" stroke="#e03030" stroke-width="0.8"/></g>
<g transform="translate(8,67)"><rect x="0.5" y="0.5" width="27" height="27" fill="#fff" stroke="#3a3a3a" stroke-width="0.9"/><rect x="0" y="0" width="28" height="4.5" fill="#000"/><rect x="1" y="0.8" width="3" height="3" fill="#fff"/><rect x="6" y="10" width="10" height="8" fill="#f8eec0" stroke="#555" stroke-width="0.7"/><circle cx="15.5" cy="18" r="4.5" fill="#f6eabf" fill-opacity="0.8" stroke="#666" stroke-width="0.7"/></g>
<g transform="translate(8,113)"><rect x="0.5" y="0.5" width="27" height="27" fill="#fff" stroke="#3a3a3a" stroke-width="0.9"/><rect x="0" y="0" width="28" height="4.5" fill="#000"/><rect x="1" y="0.8" width="3" height="3" fill="#fff"/><rect x="6" y="10.5" width="16" height="12" rx="2" fill="#f4f4f4" stroke="#c0cce0" stroke-width="0.8"/></g>
<g transform="translate(8,169)"><rect x="0.5" y="0.5" width="27" height="27" fill="#fff" stroke="#3a3a3a" stroke-width="0.9"/><rect x="0" y="0" width="28" height="4.5" fill="#000"/><rect x="1" y="0.8" width="3" height="3" fill="#fff"/><g fill="#000"><rect x="4" y="10" width="4" height="3"/><rect x="4" y="15" width="4" height="3"/><rect x="4" y="20" width="4" height="3"/></g><g fill="none" stroke="#333" stroke-width="0.7"><rect x="10" y="10" width="14" height="3"/><rect x="10" y="15" width="14" height="3"/><rect x="10" y="20" width="14" height="3"/></g></g>
<g transform="translate(8,215)"><rect x="0.5" y="0.5" width="27" height="27" fill="#fff" stroke="#3a3a3a" stroke-width="0.9"/><rect x="0" y="0" width="28" height="4.5" fill="#000"/><rect x="1" y="0.8" width="3" height="3" fill="#fff"/><path d="M6 11 L22 11 L16 17 L16 23 L12 24 L12 17 Z" fill="#999" stroke="#666" stroke-width="0.6"/><ellipse cx="14" cy="11" rx="8" ry="1.5" fill="#bbb"/></g>
<g transform="translate(8,261)"><rect x="0.5" y="0.5" width="27" height="27" fill="#fff" stroke="#3a3a3a" stroke-width="0.9"/><rect x="0" y="0" width="28" height="4.5" fill="#000"/><rect x="1" y="0.8" width="3" height="3" fill="#fff"/><path d="M5 17 L27 17" stroke="#e07070" stroke-width="0.7" stroke-dasharray="1.5 1"/><path d="M6 11 L12 14 L12 21 L6 23 Z" fill="none" stroke="#555" stroke-width="0.8"/><rect x="12" y="13" width="9" height="8" fill="#999" stroke="#555" stroke-width="0.6"/></g>
<g transform="translate(8,317)"><rect x="0.5" y="0.5" width="27" height="27" fill="#fff" stroke="#3a3a3a" stroke-width="0.9"/><rect x="0" y="0" width="28" height="4.5" fill="#000"/><rect x="1" y="0.8" width="3" height="3" fill="#fff"/><g fill="#777"><rect x="3" y="8" width="12" height="1"/><rect x="3" y="11" width="13" height="1"/><rect x="3" y="14" width="14" height="1"/><rect x="3" y="17" width="14" height="1"/></g><line x1="0" y1="21.5" x2="28" y2="21.5" stroke="#000" stroke-width="0.6"/><g fill="#333"><rect x="3" y="23" width="2" height="2"/><rect x="10" y="23.5" width="14" height="1.2"/></g></g>
<g transform="translate(8,364)"><rect x="0.5" y="0.5" width="27" height="27" fill="#fff" stroke="#3a3a3a" stroke-width="0.9"/><rect x="0" y="0" width="28" height="4.5" fill="#000"/><rect x="1" y="0.8" width="3" height="3" fill="#fff"/><rect x="7" y="9" width="14" height="16" rx="1" fill="#c0862a"/><rect x="9" y="11" width="10" height="12" fill="#f4f4f4"/><rect x="11" y="8" width="6" height="3" fill="#888"/><path d="M17 23 L19 21 L19 23 Z" fill="#999"/><g stroke="#bbb" stroke-width="0.6"><line x1="10.5" y1="14" x2="17.5" y2="14"/><line x1="10.5" y1="16" x2="17.5" y2="16"/><line x1="10.5" y1="18" x2="17.5" y2="18"/></g></g>
</svg>
</div>
<div id="cmd" class="a" style="left:72px;top:748px;width:1083px;height:49px;background:#ececec">
<div class="a" style="left:0;top:0;width:1083px;height:2px;background:#c4c4c4"></div>
<div class="a" style="left:1px;top:2px;width:1080px;height:20px;background:#fff"></div>
<div class="a" style="left:5px;top:3px;font-size:13px;color:#1414d2;white-space:nowrap"><i>Comando:</i> <span style="font-size:13.6px">preferences</span></div>
<div class="a" style="left:0;top:22px;width:1083px;height:1px;background:#c8c8c8"></div>
<div class="a" style="left:1px;top:30px;font-size:13px;color:#000;white-space:nowrap">Comando:</div>
<div class="a" style="left:66px;top:28px;width:988px;height:18px;background:#fff"></div>
<div class="a" style="left:1055px;top:24px;width:26px;height:26px;border:1px solid #a4a4a4;background:linear-gradient(#e6e6e6,#f2f2f2)"></div>
<svg class="a" style="left:1058px;top:28px" width="20" height="18"><rect x="3.5" y="4.5" width="13" height="9" fill="#f0f0f0" stroke="#222"/><rect x="3" y="4" width="14" height="3" fill="#000"/></svg>
<div class="a" style="left:0;top:0;width:1px;height:49px;background:#b4b4b4"></div>
<div class="a" style="left:1082px;top:0;width:1px;height:49px;background:#b8b8b8"></div>
</div>
<div id="status" class="a" style="top:797px;height:47px;background:#dcdcdc;border-top:1px solid #c8c8c8">
<div class="a" style="left:2px;top:8.8px;font-size:9.3px;letter-spacing:0.45px;color:#1a1a1a;white-space:nowrap;line-height:12px">73.3362,16.7454</div>
<div class="a" style="left:2px;top:28.8px;font-size:9.3px;letter-spacing:0.45px;color:#1a1a1a;white-space:nowrap;line-height:12px">@65.3362,6.7454</div>
<div class="a" style="left:254px;top:5px;width:1px;height:39px;background:#6a6a6a"></div>
<div class="a" style="left:256px;top:8.8px;font-size:9.3px;letter-spacing:0.45px;color:#1a1a1a;white-space:nowrap;line-height:12px">75.2237&lt;13°</div>
<div class="a" style="left:256px;top:28.8px;font-size:9.3px;letter-spacing:0.45px;color:#1a1a1a;white-space:nowrap;line-height:12px">@65.6834&lt;6°</div>
<div class="a" style="left:506px;top:21px;width:6px;height:6px;border-radius:3px;background:#c6c6c6"></div>
<div class="a" style="left:940px;top:21px;width:6px;height:6px;border-radius:3px;background:#c6c6c6"></div>
<div class="a" style="left:1269px;top:21px;width:6px;height:6px;border-radius:3px;background:#c6c6c6"></div>
<div class="a" style="left:498px;top:13.5px;width:201px;text-align:right;font-size:9.3px;letter-spacing:0.45px;color:#1a1a1a;white-space:nowrap;line-height:11.5px">Seleccionar entidad o región<br>Mover entidad o referencia</div>
<svg class="a" style="left:716px;top:8px" width="21" height="32"><rect x="1.5" y="0.8" width="18" height="29.5" rx="9" fill="#fff" stroke="#333" stroke-width="0.9"/><path d="M1.5 13 H19.5 M10.5 0.8 V13" stroke="#333" stroke-width="0.8"/><rect x="9" y="3" width="3" height="6" rx="1.5" fill="#fff" stroke="#333" stroke-width="0.7"/></svg>
<div class="a" style="left:949px;top:13.5px;font-size:9.3px;letter-spacing:0.45px;color:#1a1a1a;white-space:nowrap;line-height:11.5px">Las entidades seleccionadas:<br>3 entidades en 2 capas.</div>
</div>
<div class="a" style="left:0;top:107px;width:1500px;height:1px;background:#bdbdbd"></div>
</body></html>
